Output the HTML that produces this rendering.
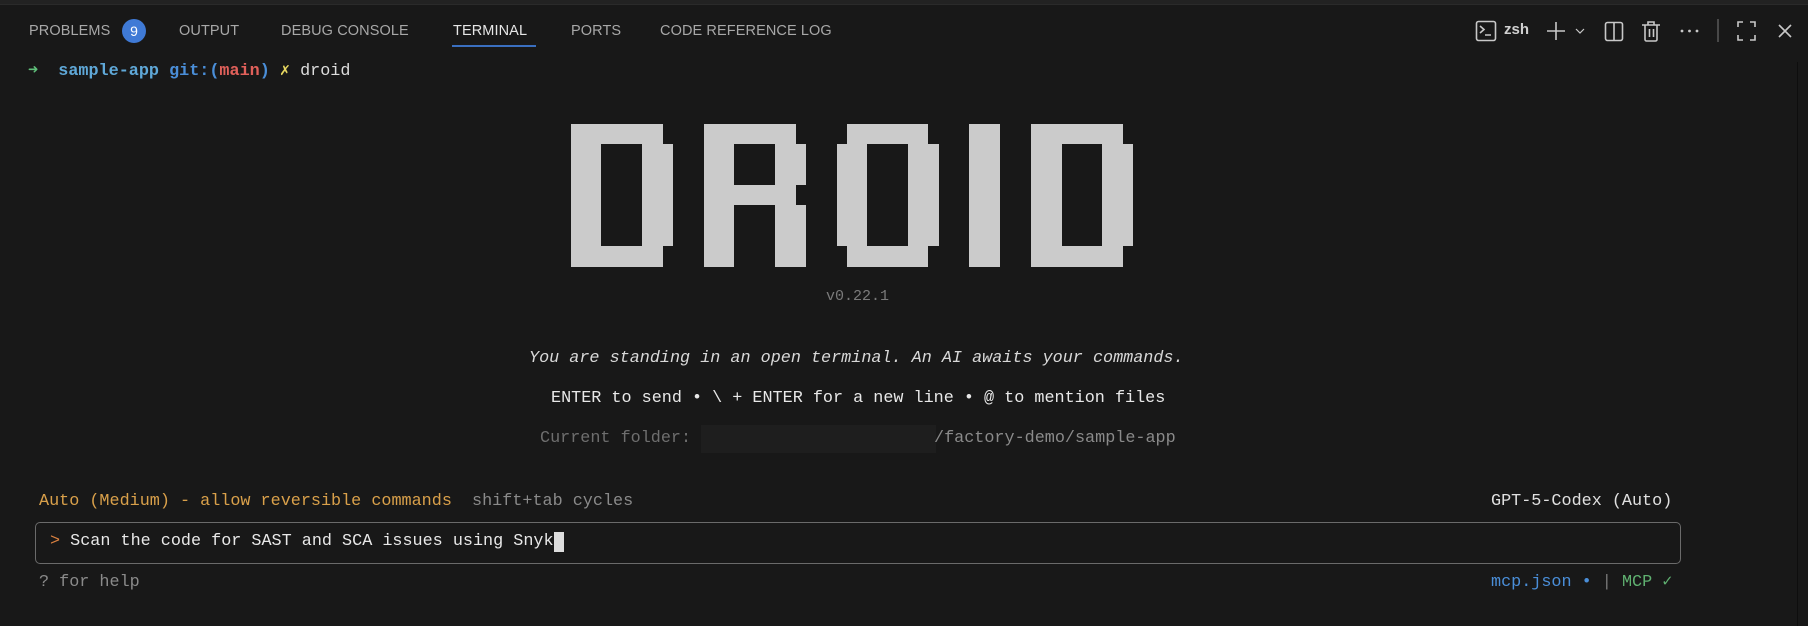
<!DOCTYPE html>
<html><head><meta charset="utf-8"><style>
*{margin:0;padding:0;box-sizing:border-box}
body{width:1808px;height:626px;background:#181818;position:relative;overflow:hidden;font-family:"Liberation Mono",monospace;}
.top{position:absolute;left:0;top:0;width:1808px;height:5px;background:#222;border-bottom:1px solid #2a2a2a}
.tab{position:absolute;top:21px;font-family:"Liberation Sans",sans-serif;font-size:14.5px;color:#a8a8a8;letter-spacing:0.1px;line-height:20px}
.badge{position:absolute;left:122px;top:19px;width:24px;height:24px;border-radius:12px;background:#3f7ad6;color:#fff;font-family:"Liberation Sans",sans-serif;font-size:14px;text-align:center;line-height:24px}
.t{position:absolute;font-size:16.8px;line-height:20px;white-space:pre}
</style></head><body>
<div class="top"></div>
<div class="tab" style="left:29px">PROBLEMS</div>
<div class="badge">9</div>
<div class="tab" style="left:179px">OUTPUT</div>
<div class="tab" style="left:281px">DEBUG CONSOLE</div>
<div class="tab" style="left:453px;color:#e6e6e6">TERMINAL</div>
<div style="position:absolute;left:452px;top:45px;width:84px;height:2px;background:#3a6fc0"></div>
<div class="tab" style="left:571px">PORTS</div>
<div class="tab" style="left:660px">CODE REFERENCE LOG</div>

<svg style="position:absolute;left:0;top:0" width="1808" height="60" fill="none" stroke="#c8c8c8" stroke-width="1.6">
<rect x="1476.5" y="21.5" width="19" height="19" rx="2"/>
<path d="M1480 26l4 3.5-4 3.5M1485 35h6"/>
<path d="M1547 31h18M1556 22v18"/>
<path d="M1576 29l4 4 4-4" stroke-width="1.2"/>
<rect x="1605.5" y="22.5" width="17" height="18" rx="2"/><path d="M1614 22.5v18"/>
<path d="M1642 25h18M1648 25v-3h6v3M1645 25v14.5a1.5 1.5 0 0 0 1.5 1.5h9a1.5 1.5 0 0 0 1.5-1.5V25M1649.5 29v8M1653.5 29v8"/>
<g fill="#c8c8c8" stroke="none"><circle cx="1682" cy="31" r="1.4"/><circle cx="1689.5" cy="31" r="1.4"/><circle cx="1697" cy="31" r="1.4"/></g>
<path d="M1718 19v23" stroke="#555"/>
<path d="M1738 27v-5h5M1750 22h5v5M1755 35v5h-5M1743 40h-5v-5"/>
<path d="M1779 25l12 12M1791 25l-12 12"/>
</svg>
<div style="position:absolute;left:1504px;top:21px;font-family:'Liberation Sans',sans-serif;font-size:15px;color:#d0d0d0;font-weight:bold">zsh</div>
<div style="position:absolute;left:1797px;top:62px;width:1px;height:564px;background:#0e0e0e"></div>

<div class="t" style="left:28px;top:62px"><span style="color:#5fbf7a">➜</span>  <span style="color:#5fa8d8;font-weight:bold">sample-app</span> <span style="color:#4a8ed8;font-weight:bold">git:(</span><span style="color:#e0605a;font-weight:bold">main</span><span style="color:#4a8ed8;font-weight:bold">)</span> <span style="color:#e8d860">✗</span> <span style="color:#ddd">droid</span></div>

<svg style="position:absolute;left:0;top:0" width="1808" height="300">
<g fill="#cbcbcb" fill-rule="evenodd">
<path d="M571 124H663V144H673V246H663V267H571ZM601 144V246H642V144Z"/>
<path d="M704 124H796V144H806V185H796V205H806V267H775V205H734V267H704ZM734 144V185H775V144Z"/>
<path d="M847 124H928V144H939V246H928V267H847V246H837V144H847ZM867 144V246H908V144Z"/>
<path d="M969 124H1000V267H969Z"/>
<path d="M1031 124H1123V144H1133V246H1123V267H1031ZM1062 144V246H1102V144Z"/>
</g></svg>

<div class="t" style="left:826px;top:287px;font-size:15px;color:#7a7a7a">v0.22.1</div>
<div class="t" style="left:529px;top:349px;font-style:italic;color:#d8d8d8">You are standing in an open terminal. An AI awaits your commands.</div>
<div class="t" style="left:551px;top:389px;color:#e8e8e8">ENTER to send • \ + ENTER for a new line • @ to mention files</div>
<div class="t" style="left:540px;top:429px;color:#6e6e6e">Current folder:</div>
<div style="position:absolute;left:701px;top:425px;width:235px;height:28px;background:#1e1e1e"></div>
<div class="t" style="left:934px;top:429px;color:#8a8a8a">/factory-demo/sample-app</div>

<div class="t" style="left:39px;top:492px;color:#d9a04a">Auto (Medium) - allow reversible commands  <span style="color:#8a8a8a">shift+tab cycles</span></div>
<div class="t" style="left:1491px;top:492px;color:#e0e0e0">GPT-5-Codex (Auto)</div>
<div style="position:absolute;left:35px;top:522px;width:1646px;height:42px;border:1.5px solid #6a6a6a;border-radius:5px"></div>
<div class="t" style="left:50px;top:532px;color:#e8e8e8"><span style="color:#d98040">&gt;</span> Scan the code for SAST and SCA issues using Snyk<span style="display:inline-block;width:10px;height:20px;background:#ddd;vertical-align:top"></span></div>
<div class="t" style="left:39px;top:573px;color:#8a8a8a">? for help</div>
<div class="t" style="left:1491px;top:573px;color:#4a8ed8">mcp.json • <span style="color:#777">|</span> <span style="color:#5fb070">MCP ✓</span></div>
</body></html>
